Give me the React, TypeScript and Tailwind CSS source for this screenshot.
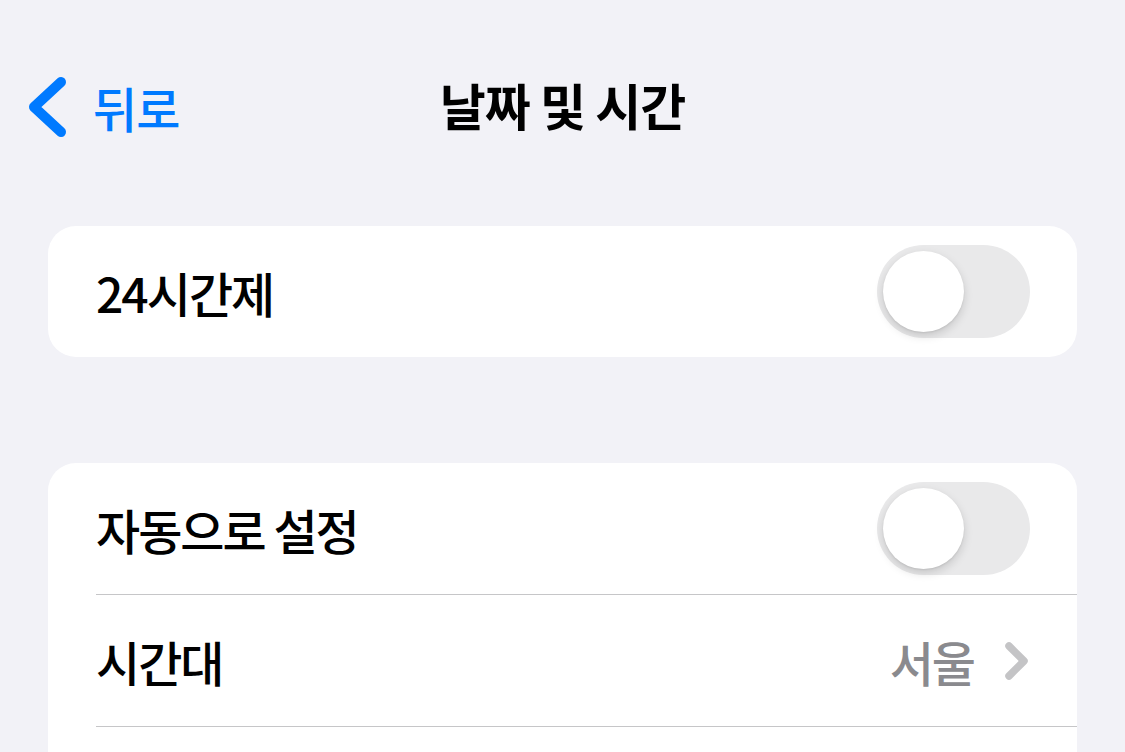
const font = { fontFamily: '"Noto Sans CJK KR", "Noto Sans", sans-serif' };

function Toggle() {
	return (
		<div className="w-[153px] h-[93px] rounded-full bg-[#e9e9ea] p-[6px] flex items-center">
			<div className="w-[81px] h-[81px] rounded-full bg-white shadow-[0_4px_10px_rgba(0,0,0,0.15),0_1px_2px_rgba(0,0,0,0.08)]" />
		</div>
	);
}

function Row({ label, children, divider }: { label?: string; children?: React.ReactNode; divider?: boolean }) {
	return (
		<div className="pl-[48px]">
			<div className={`flex items-center justify-between pr-[47px] ${divider ? 'h-[132px] border-b border-[#c6c6c8]' : 'h-[131px]'}`}>
				<span className="text-[48px] font-medium tracking-[-2px] text-black">{label}</span>
				{children}
			</div>
		</div>
	);
}

export default function App() {
	return (
		<div className="w-[1125px] h-[752px] overflow-hidden bg-[#f2f2f7]" style={font}>
			{/* Nav bar */}
			<div className="relative h-[226px] flex justify-center pt-[75px]">
				<div className="absolute left-[24px] top-[74px] flex items-center text-[#007aff]">
					<svg width="46" height="66" viewBox="0 0 46 66" fill="none">
						<path d="M37 8 L10 33 L37 58" stroke="#007aff" strokeWidth="10" strokeLinecap="round" strokeLinejoin="round" />
					</svg>
					<span className="text-[48px] font-medium tracking-[-1px] ml-[23px] leading-[58px]">뒤로</span>
				</div>
				<h1 className="text-[50px] leading-[58px] font-bold tracking-[-1px] text-black h-[58px]">날짜 및 시간</h1>
			</div>

			<div className="mx-[48px] bg-white rounded-[28px] overflow-hidden">
				<Row label="24시간제">
					<Toggle />
				</Row>
			</div>

			<div className="mx-[48px] mt-[106px] bg-white rounded-[28px] overflow-hidden">
				<Row label="자동으로 설정" divider>
					<Toggle />
				</Row>
				<Row label="시간대" divider>
					<div className="flex items-center gap-[30px]">
						<span className="text-[48px] font-medium tracking-[-2px] text-[#8a8a8e]">서울</span>
						<svg width="26" height="38" viewBox="0 0 26 38" fill="none">
							<path d="M5 4 L20 19 L5 34" stroke="#c4c4c6" strokeWidth="7.5" strokeLinecap="round" strokeLinejoin="round" />
						</svg>
					</div>
				</Row>
				<Row />
			</div>
		</div>
	);
}
